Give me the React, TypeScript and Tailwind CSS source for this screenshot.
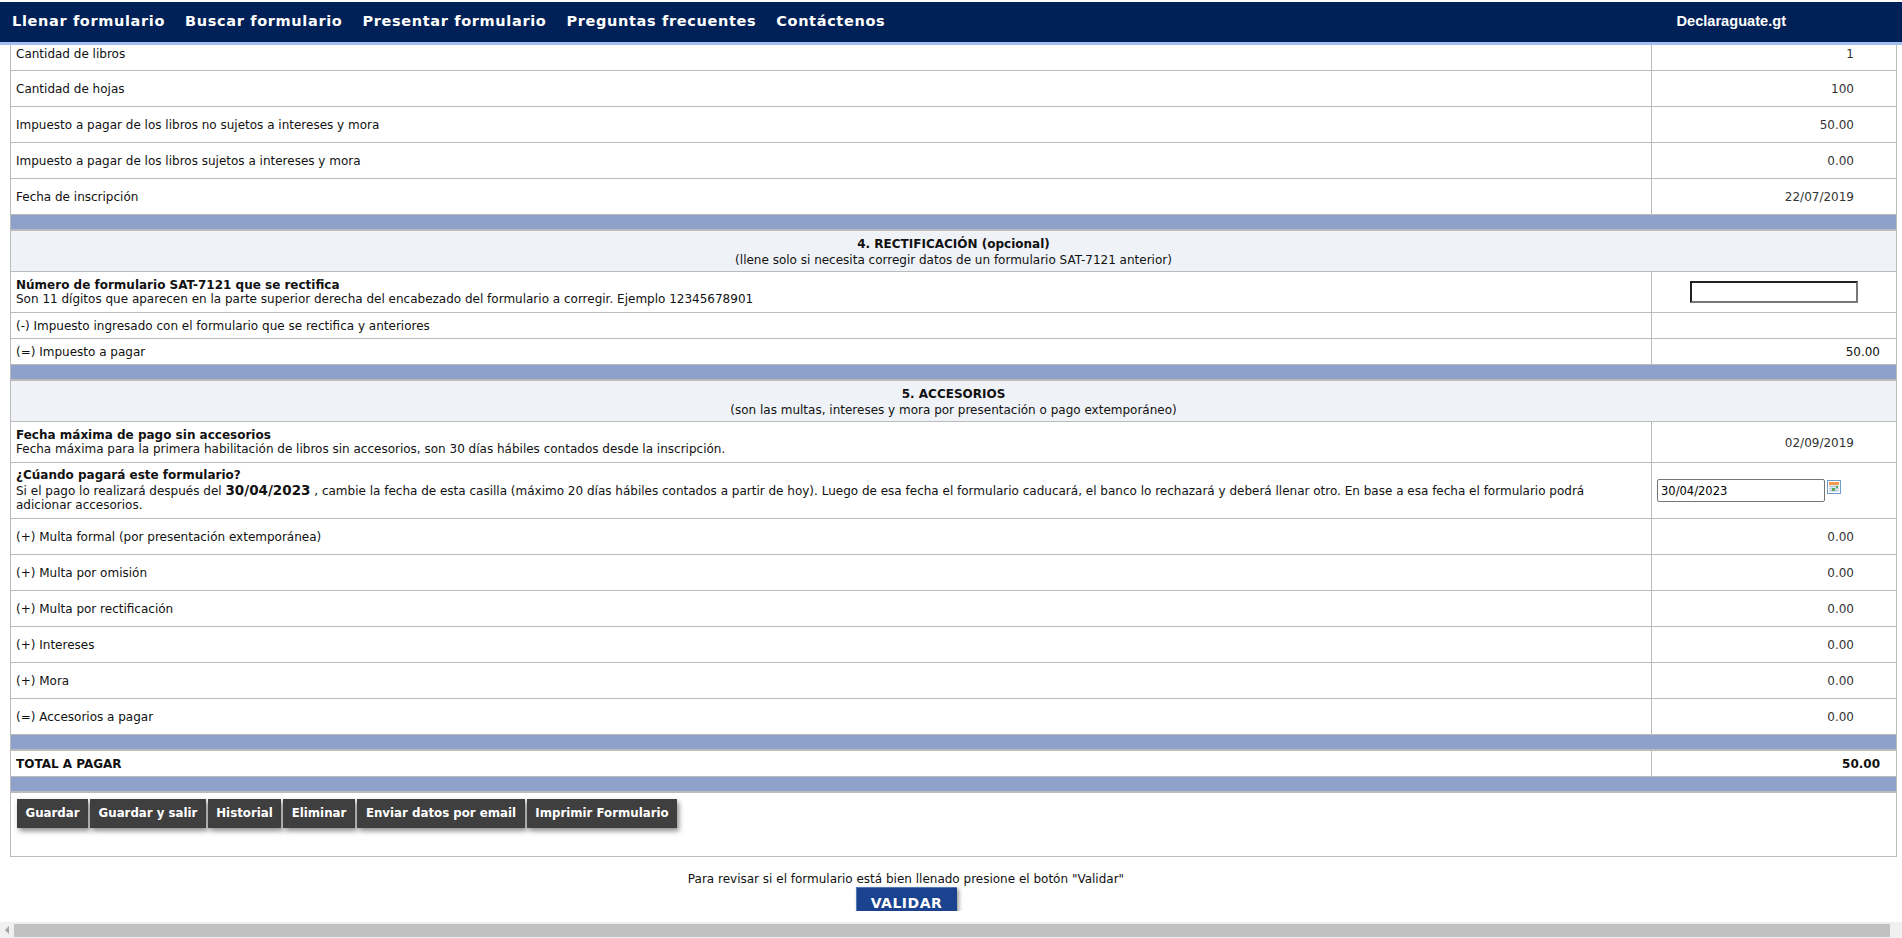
import * as React from "react";

const sectionTop = [
  { label: "Cantidad de hojas", value: "100" },
  { label: "Impuesto a pagar de los libros no sujetos a intereses y mora", value: "50.00" },
  { label: "Impuesto a pagar de los libros sujetos a intereses y mora", value: "0.00" },
  { label: "Fecha de inscripción", value: "22/07/2019" },
];

const accesorios = [
  { label: "(+) Multa formal (por presentación extemporánea)", value: "0.00" },
  { label: "(+) Multa por omisión", value: "0.00" },
  { label: "(+) Multa por rectificación", value: "0.00" },
  { label: "(+) Intereses", value: "0.00" },
  { label: "(+) Mora", value: "0.00" },
  { label: "(=) Accesorios a pagar", value: "0.00" },
];

const navLinks = [
  "Llenar formulario",
  "Buscar formulario",
  "Presentar formulario",
  "Preguntas frecuentes",
  "Contáctenos",
];

const actions = [
  { label: "Guardar", width: "w-[71px]" },
  { label: "Guardar y salir", width: "w-[116px]" },
  { label: "Historial", width: "w-[73px]" },
  { label: "Eliminar", width: "w-[72px]" },
  { label: "Enviar datos por email", width: "w-[168px]" },
  { label: "Imprimir Formulario", width: "w-[150px]" },
];

function Row({
  height,
  left,
  right,
}: {
  height: string;
  left: React.ReactNode;
  right?: React.ReactNode;
}) {
  return (
    <div className={`flex border-b border-[#bbbbbb] ${height}`}>
      <div className="flex min-w-0 flex-1 flex-col justify-center pl-[5px]">{left}</div>
      <div className="flex w-[245px] items-center justify-end border-l border-[#bbbbbb]">{right}</div>
    </div>
  );
}

function Label({ children }: { children: React.ReactNode }) {
  return <span className="pt-[2px]">{children}</span>;
}

function Value({ children }: { children: React.ReactNode }) {
  return <span className="pr-[42px] pt-[2px] text-[#333333]">{children}</span>;
}

function Band() {
  return <div className="h-[16px] border-b-2 border-[#bbbbbb] bg-[#8da1ca]" />;
}

function SectionHead({ title, note }: { title: string; note: string }) {
  return (
    <div className="flex h-[41px] flex-col items-center justify-center border-b border-[#bbbbbb] bg-[#eff2f7] pt-[2px] leading-[16px]">
      <div className="font-bold">{title}</div>
      <div>{note}</div>
    </div>
  );
}

function CalendarIcon() {
  return (
    <svg width="14" height="14" viewBox="0 0 14 14" className="mb-[8px] ml-[2px] shrink-0">
      <rect x="0.5" y="0.5" width="13" height="13" fill="#ffffff" stroke="#6f9bd1" />
      <rect x="2" y="2" width="10" height="3" fill="#f59a4c" />
      <path d="M2 6.5h10M2 8.5h10M2 10.5h10M4 5v7M6 5v7M8 5v7M10 5v7" stroke="#b9cbe3" strokeWidth="1" />
      <rect x="5" y="8" width="3" height="3" fill="#58a85a" />
      <rect x="9" y="6" width="2" height="2" fill="#58a85a" />
    </svg>
  );
}

export default function App() {
  return (
    <div className="flex h-[938px] w-[1902px] flex-col overflow-hidden bg-white font-['DejaVu_Sans',sans-serif] text-[12px] leading-[14.5px] text-[#111111]">
      <nav className="mt-[2px] flex h-[43px] shrink-0 items-center border-b-[3px] border-[#a4c0f0] bg-[#002157] pb-[2px] pl-[12px] text-white">
        <div className="flex gap-[20px] text-[14.5px] font-bold tracking-[0.65px]">
          {navLinks.map((link) => (
            <span key={link}>{link}</span>
          ))}
        </div>
        <span className="ml-auto mr-[116px] font-['Liberation_Sans',sans-serif] text-[14.6px] font-bold">
          Declaraguate.gt
        </span>
      </nav>

      <main className="h-[866px] shrink-0 overflow-hidden">
        <div className="ml-[10px] w-[1887px] border-x border-b border-[#bbbbbb]">
          <Row
            height="h-[26px]"
            left={<span className="pb-[7px]">Cantidad de libros</span>}
            right={<span className="pb-[7px] pr-[42px] text-[#333333]">1</span>}
          />
          {sectionTop.map((row) => (
            <Row key={row.label} height="h-[36px]" left={<Label>{row.label}</Label>} right={<Value>{row.value}</Value>} />
          ))}
          <Band />

          <SectionHead
            title="4. RECTIFICACIÓN (opcional)"
            note="(llene solo si necesita corregir datos de un formulario SAT-7121 anterior)"
          />
          <Row
            height="h-[41px]"
            left={
              <>
                <div className="font-bold">Número de formulario SAT-7121 que se rectifica</div>
                <div>Son 11 dígitos que aparecen en la parte superior derecha del encabezado del formulario a corregir. Ejemplo 12345678901</div>
              </>
            }
            right={
              <input
                aria-label="Número de formulario"
                className="mr-[38px] h-[22px] w-[168px] border-2 border-t-[#222222] border-r-[#777777] border-b-[#777777] border-l-[#222222] bg-white"
              />
            }
          />
          <Row height="h-[26px]" left={<Label>(-) Impuesto ingresado con el formulario que se rectifica y anteriores</Label>} />
          <Row
            height="h-[26px]"
            left={<Label>(=) Impuesto a pagar</Label>}
            right={<span className="pr-[16px] pt-[2px]">50.00</span>}
          />
          <Band />

          <SectionHead
            title="5. ACCESORIOS"
            note="(son las multas, intereses y mora por presentación o pago extemporáneo)"
          />
          <Row
            height="h-[41px]"
            left={
              <>
                <div className="font-bold">Fecha máxima de pago sin accesorios</div>
                <div>Fecha máxima para la primera habilitación de libros sin accesorios, son 30 días hábiles contados desde la inscripción.</div>
              </>
            }
            right={<Value>02/09/2019</Value>}
          />
          <Row
            height="h-[56px]"
            left={
              <>
                <div className="font-bold">¿Cúando pagará este formulario?</div>
                <div>
                  Si el pago lo realizará después del <b className="text-[13.5px]">30/04/2023</b> , cambie la fecha de esta casilla (máximo 20 días hábiles contados a partir de hoy). Luego de esa fecha el formulario caducará, el banco lo rechazará y deberá llenar otro. En base a esa fecha el formulario podrá
                  <br />
                  adicionar accesorios.
                </div>
              </>
            }
            right={
              <div className="flex w-full items-center pl-[5px]">
                <input
                  aria-label="Fecha de pago"
                  defaultValue="30/04/2023"
                  className="h-[23px] w-[168px] rounded-[2px] border border-[#767676] bg-white pl-[3px] text-[11.5px] text-black outline-none"
                />
                <CalendarIcon />
              </div>
            }
          />
          {accesorios.map((row) => (
            <Row key={row.label} height="h-[36px]" left={<Label>{row.label}</Label>} right={<Value>{row.value}</Value>} />
          ))}
          <Band />

          <Row
            height="h-[26px]"
            left={<Label><b>TOTAL A PAGAR</b></Label>}
            right={<span className="pr-[16px] pt-[2px] font-bold">50.00</span>}
          />
          <Band />

          <div className="flex h-[63px] items-start gap-[2px] pl-[6px] pt-[6px]">
            {actions.map((action) => (
              <button
                key={action.label}
                type="button"
                className={`h-[29px] ${action.width} bg-[#3f3f3f] text-center text-[11.8px] font-bold text-white shadow-[2px_3px_5px_rgba(0,0,0,0.45)]`}
              >
                {action.label}
              </button>
            ))}
          </div>
        </div>

        <div className="flex w-[1812px] flex-col items-center pt-[15px]">
          <p className="leading-[14px]">Para revisar si el formulario está bien llenado presione el botón "Validar"</p>
          <button
            type="button"
            className="mt-[1px] h-[34px] w-[101px] border-t border-l border-[#5577b5] bg-[#1a428f] pb-[3px] text-[14px] font-bold tracking-[0.5px] text-white shadow-[2px_2px_4px_rgba(0,0,0,0.4)]"
          >
            VALIDAR
          </button>
        </div>
      </main>

      <div className="mt-auto flex h-[16px] shrink-0 items-center bg-[#f0f0f0] pr-[12px]">
        <div className="flex w-[14px] justify-center">
          <div className="h-0 w-0 border-y-[4px] border-r-[4px] border-y-transparent border-r-[#a3a3a3]" />
        </div>
        <div className="h-[13px] flex-1 bg-[#c1c1c1]" />
      </div>
    </div>
  );
}
